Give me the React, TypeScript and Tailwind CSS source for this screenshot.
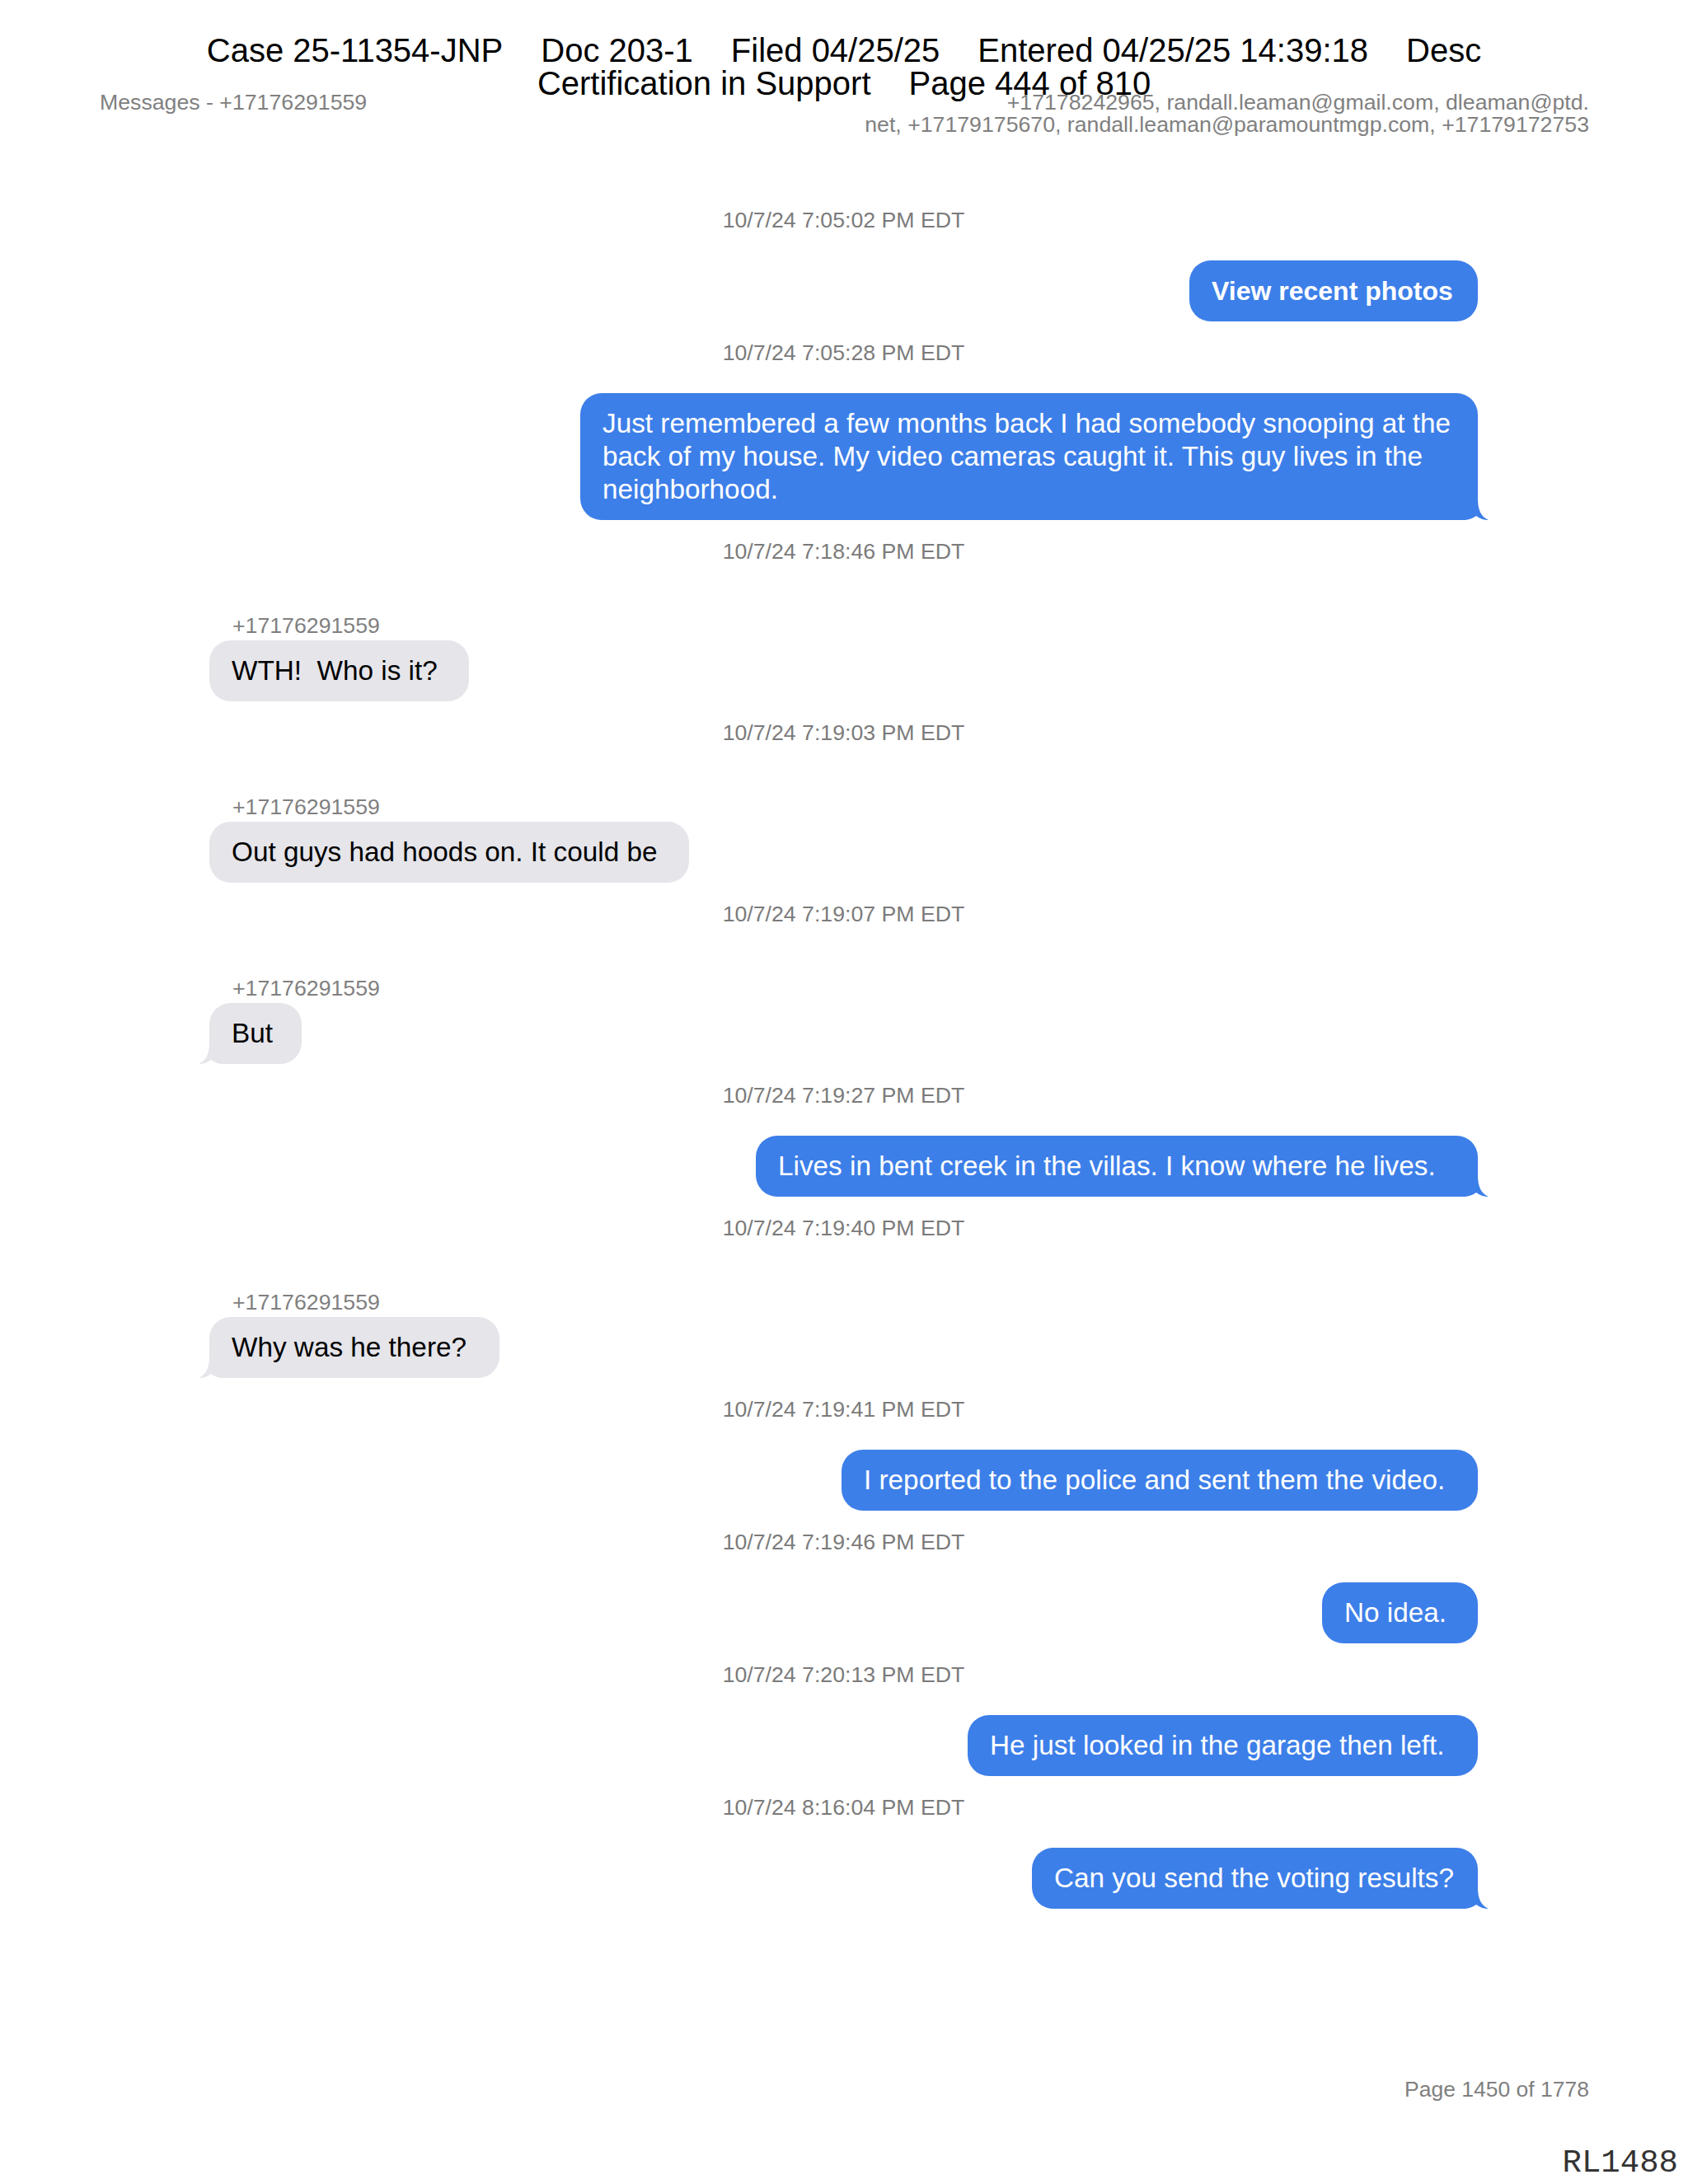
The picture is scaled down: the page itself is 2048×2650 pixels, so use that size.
import React from "react";

type Msg = {
    time: string;
    text: string;
    out: boolean;
    width: string;
    tail?: boolean;
    bold?: boolean;
};

const SENDER = "+17176291559";

const messages: Msg[] = [
    { time: "10/7/24 7:05:02 PM EDT", text: "View recent photos", out: true, width: "w-[350px]", bold: true },
    {
        time: "10/7/24 7:05:28 PM EDT",
        text: "Just remembered a few months back I had somebody snooping at the back of my house. My video cameras caught it. This guy lives in the neighborhood.",
        out: true,
        width: "w-[1089px]",
        tail: true,
    },
    { time: "10/7/24 7:18:46 PM EDT", text: "WTH!  Who is it?", out: false, width: "w-[315px]" },
    { time: "10/7/24 7:19:03 PM EDT", text: "Out guys had hoods on. It could be", out: false, width: "w-[582px]" },
    { time: "10/7/24 7:19:07 PM EDT", text: "But", out: false, width: "w-[112px]", tail: true },
    { time: "10/7/24 7:19:27 PM EDT", text: "Lives in bent creek in the villas. I know where he lives.", out: true, width: "w-[876px]", tail: true },
    { time: "10/7/24 7:19:40 PM EDT", text: "Why was he there?", out: false, width: "w-[352px]", tail: true },
    { time: "10/7/24 7:19:41 PM EDT", text: "I reported to the police and sent them the video.", out: true, width: "w-[772px]" },
    { time: "10/7/24 7:19:46 PM EDT", text: "No idea.", out: true, width: "w-[189px]" },
    { time: "10/7/24 7:20:13 PM EDT", text: "He just looked in the garage then left.", out: true, width: "w-[619px]" },
    { time: "10/7/24 8:16:04 PM EDT", text: "Can you send the voting results?", out: true, width: "w-[541px]", tail: true },
];

function Tail({ out }: { out: boolean }) {
    if (out) {
        return (
            <svg className="absolute bottom-0 right-[-13px]" width="40" height="40" viewBox="0 0 40 40">
                <path d="M0,0 H27 V14 C27,28 31,36 40,40 C34,40 29,38 25,35 C21,38 16,40 10,40 H0 Z" fill="#3d7fe9" />
            </svg>
        );
    }
    return (
        <svg className="absolute bottom-0 left-[-13px]" width="40" height="40" viewBox="0 0 40 40">
            <path d="M40,0 H13 V14 C13,28 9,36 0,40 C6,40 11,38 15,35 C19,38 24,40 30,40 H40 Z" fill="#e5e5ea" />
        </svg>
    );
}

function Bubble({ m }: { m: Msg }) {
    const multi = m.text.length > 70;
    return (
        <div
            className={
                "relative rounded-[26px] pl-[27px] pr-[20px] py-[17px] leading-[40px] " +
                m.width +
                (m.out ? " bg-[#3d7fe9] text-white" : " bg-[#e5e5ea] text-black") +
                (m.bold ? " text-[32px] font-bold" : " text-[33.3px]") +
                (multi ? "" : " whitespace-pre")
            }
        >
            {m.tail && <Tail out={m.out} />}
            <span className="relative">{m.text}</span>
        </div>
    );
}

export default function App() {
    return (
        <div className="relative w-[2048px] h-[2650px] bg-white font-['Liberation_Sans',Arial,sans-serif] overflow-hidden">
            {/* court filing stamp */}
            <div className="absolute top-[41px] left-0 right-0 flex flex-col items-center text-[40px] leading-[40px] text-black z-10">
                <div className="flex gap-[46px]">
                    <span>Case 25-11354-JNP</span>
                    <span>Doc 203-1</span>
                    <span>Filed 04/25/25</span>
                    <span>Entered 04/25/25 14:39:18</span>
                    <span>Desc</span>
                </div>
                <div className="flex gap-[46px]">
                    <span>Certification in Support</span>
                    <span>Page 444 of 810</span>
                </div>
            </div>

            <div className="pl-[121px] pr-[120px] pt-[111px]">
                <div className="flex justify-between items-start text-[26.7px] leading-[27px] text-[#808080]">
                    <div>Messages - +17176291559</div>
                    <div className="text-right">
                        +17178242965, randall.leaman@gmail.com, dleaman@ptd.
                        <br />
                        net, +17179175670, randall.leaman@paramountmgp.com, +17179172753
                    </div>
                </div>

                <div className="pl-[133px] pr-[135px] pt-[64px] flex flex-col">
                    {messages.map((m, i) => (
                        <div key={i} className="flex flex-col">
                            <div className="mt-[25px] text-center text-[26.7px] leading-[27px] text-[#7b7b7b]">{m.time}</div>
                            {m.out ? (
                                <div className="mt-[35px] flex justify-end">
                                    <Bubble m={m} />
                                </div>
                            ) : (
                                <div className="mt-[63px] flex flex-col items-start">
                                    <div className="pl-[28px] text-[26.7px] leading-[27px] text-[#808080]">{SENDER}</div>
                                    <div className="mt-[4px]">
                                        <Bubble m={m} />
                                    </div>
                                </div>
                            )}
                        </div>
                    ))}
                </div>

                <div className="mt-[206px] text-right text-[26.5px] leading-[27px] text-[#808080]">Page 1450 of 1778</div>
            </div>

            <div className="mt-[57px] flex justify-end pr-[12px] font-['Liberation_Mono',monospace] text-[39px] leading-[39px] text-[#333]">
                RL1488
            </div>
        </div>
    );
}
